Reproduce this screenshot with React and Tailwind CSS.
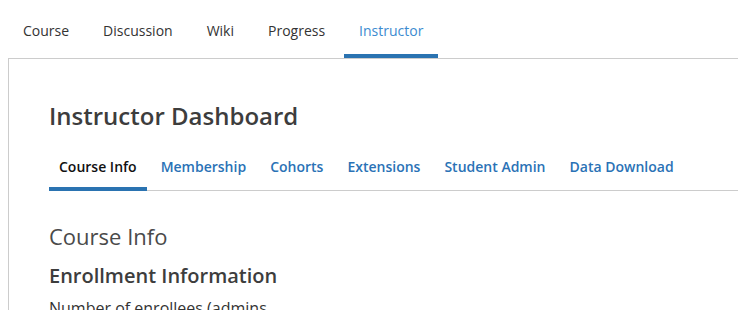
import React from "react";

const topTabs = ["Course", "Discussion", "Wiki", "Progress", "Instructor"];
const subTabs = ["Course Info", "Membership", "Cohorts", "Extensions", "Student Admin", "Data Download"];

export default function App() {
  return (
    <div className="h-[310px] w-[738px] overflow-hidden bg-white font-['Open_Sans',sans-serif] text-[#333]">
      <nav className="flex gap-1 pl-2 pt-[20px]">
        {topTabs.map((tab) => (
          <a
            key={tab}
            className={`block border-b-4 px-[15px] pb-[13px] text-[14px] leading-[21px] ${
              tab === "Instructor" ? "border-[#2a73b1] text-[#3c8bd0]" : "border-transparent text-[#333]"
            }`}
          >
            {tab}
          </a>
        ))}
      </nav>

      <div className="ml-2 border-l border-t border-[#cccccc] pl-10 pt-[41px]">
        <h1 className="text-[24px] font-semibold leading-[32px] text-[#3d3d3d]">Instructor Dashboard</h1>

        <div className="mt-[24px] flex gap-1 border-b border-[#cccccc]">
          {subTabs.map((tab, i) => (
            <a
              key={tab}
              className={`-mb-px block border-b-4 px-[10px] pb-[10px] text-[14px] font-semibold leading-[21px] ${
                i === 0 ? "border-[#2a73b1] text-[#111]" : "border-transparent text-[#2a72b6]"
              }`}
            >
              {tab}
            </a>
          ))}
        </div>

        <h2 className="mt-[30px] text-[22px] font-normal leading-[30px] text-[#4a4a4a]">Course Info</h2>
        <h3 className="mt-[12px] text-[20px] font-semibold leading-[26px] text-[#3d3d3d]">Enrollment Information</h3>
        <p className="mt-[7px] max-w-[240px] text-[16px] leading-[24px] text-[#333]">Number of enrollees (admins, staff, and students)</p>
      </div>
    </div>
  );
}
